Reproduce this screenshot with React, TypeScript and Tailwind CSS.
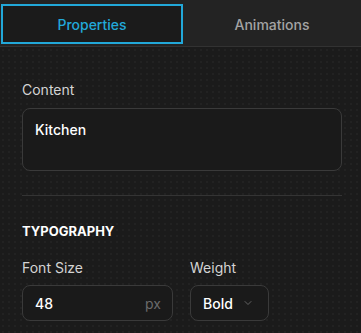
import { ChevronDown } from 'lucide-react';

export default function App() {
  return (
    <div
      className="w-[361px] h-[333px] overflow-hidden bg-[#1b1b1b] text-white"
      style={{ fontFamily: 'Inter, "Noto Sans", sans-serif' }}
    >
      {/* Tabs */}
      <div className="flex h-[47px] bg-[#232323] border-b border-[#323232] pt-[4px] pl-[1px]">
        <button className="w-[182px] h-[40px] border-2 border-[#22a8d9] bg-[#1b1b1b] text-[#22a8d9] text-[14px] font-medium">
          Properties
        </button>
        <button className="flex-1 h-[40px] text-[#a3a3a3] text-[14px] font-medium">
          Animations
        </button>
      </div>

      {/* Body */}
      <div className="h-[286px] pl-[22px] pr-[19px] pt-[33px] bg-[radial-gradient(#222222_1px,transparent_1px)] bg-[size:6px_6px]">
        <label className="block text-[14px] leading-[20px] text-[#d4d4d4]">Content</label>
        <div className="mt-[8px] h-[63px] rounded-[8px] border border-[#3a3a3a] bg-[#1a1a1a] px-[12px] pt-[10px] text-[14px] font-medium text-white">
          Kitchen
        </div>

        <div className="mt-[24px] h-px bg-[#343434]" />

        <h3 className="mt-[25px] text-[13px] leading-[20px] font-bold text-white">
          TYPOGRAPHY
        </h3>

        <div className="mt-[17px] flex gap-[17px]">
          <div className="flex flex-col w-[151px]">
            <label className="text-[14px] leading-[20px] text-[#d4d4d4]">Font Size</label>
            <div className="mt-[7px] flex h-[36px] items-center justify-between rounded-[8px] border border-[#3a3a3a] bg-[#1a1a1a] pl-[12px] pr-[11px]">
              <span className="text-[14px] font-medium text-white">48</span>
              <span className="text-[14px] text-[#6b6b6b]">px</span>
            </div>
          </div>
          <div className="flex flex-col">
            <label className="text-[14px] leading-[20px] text-[#d4d4d4]">Weight</label>
            <div className="mt-[7px] flex h-[36px] w-[79px] items-center gap-[9px] rounded-[8px] border border-[#3a3a3a] bg-[#1a1a1a] pl-[12px]">
              <span className="text-[14px] font-medium text-white">Bold</span>
              <ChevronDown size={12} strokeWidth={1.5} className="text-[#7a7a7a]" />
            </div>
          </div>
        </div>
      </div>
    </div>
  );
}
